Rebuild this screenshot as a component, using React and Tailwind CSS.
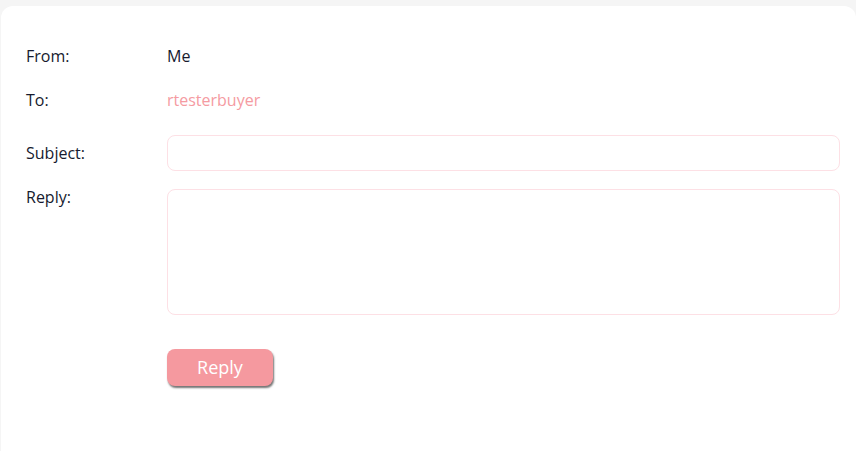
export default function App() {
  return (
    <div className="min-h-screen bg-[#f5f5f5] pt-[6px] pl-[1px]" style={{ fontFamily: '"Open Sans", "Noto Sans", sans-serif' }}>
      <div className="min-h-[445px] bg-white rounded-t-[12px] pl-[25px] pr-[16px] pt-[38px] text-[16px] text-[#161a2e]">
        <div className="flex items-center h-6">
          <div className="w-[141px] shrink-0">From:</div>
          <div>Me</div>
        </div>
        <div className="flex items-center h-6 mt-5">
          <div className="w-[141px] shrink-0">To:</div>
          <div className="text-[#f59ba2]">rtesterbuyer</div>
        </div>
        <div className="flex items-center mt-[23px]">
          <div className="w-[141px] shrink-0">Subject:</div>
          <input className="flex-1 h-9 rounded-lg border border-[#fde0e5] outline-none px-3" />
        </div>
        <div className="flex items-start mt-[18px]">
          <div className="w-[141px] shrink-0 leading-4">Reply:</div>
          <textarea className="flex-1 h-[126px] rounded-lg border border-[#fde0e5] outline-none px-3 py-2 resize-none" />
        </div>
        <div className="flex mt-[34px] pl-[141px]">
          <button className="w-[106px] h-[37px] rounded-lg bg-[#f5999f] text-white text-[18px] shadow-[1px_2px_2px_rgba(0,0,0,0.55)]">
            Reply
          </button>
        </div>
      </div>
    </div>
  );
}
